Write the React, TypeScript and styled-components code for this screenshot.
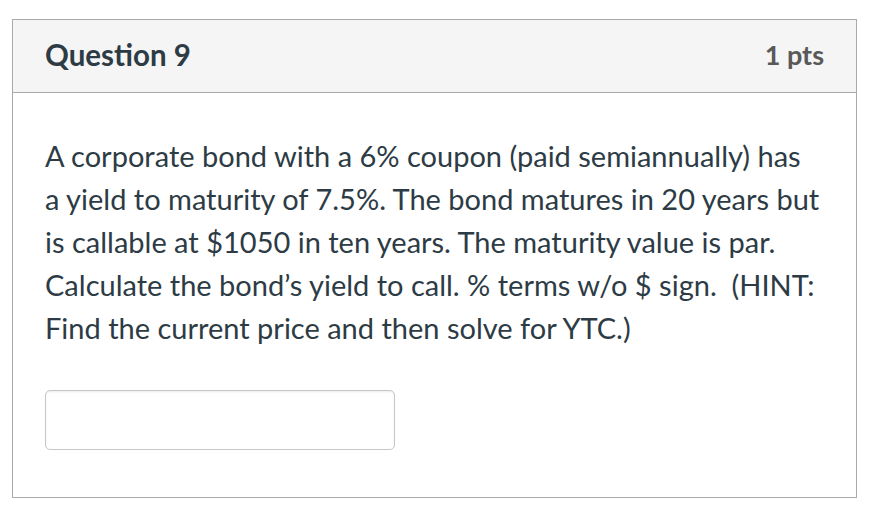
import React from "react";
import styled, { createGlobalStyle } from "styled-components";

const Global = createGlobalStyle`
  html, body { margin: 0; padding: 0; background: #ffffff; }
  body { font-family: Lato, "Noto Sans", sans-serif; }
`;

const Page = styled.div`
  padding: 19px 16px 0 12px;
`;

const Card = styled.div`
  width: 845px;
  height: 479px;
  box-sizing: border-box;
  border: 1px solid #aaaaaa;
  display: flex;
  flex-direction: column;
`;

const Header = styled.div`
  height: 73px;
  box-sizing: border-box;
  background: #f5f5f5;
  border-bottom: 1px solid #aaaaaa;
  display: flex;
  align-items: center;
  justify-content: space-between;
  padding: 0 32px 4px 32px;
`;

const Title = styled.h2`
  margin: 0;
  font-size: 29.5px;
  font-weight: 700;
  color: #2d3b45;
`;

const Points = styled.span`
  font-size: 27px;
  font-weight: 700;
  color: #595959;
`;

const Body = styled.div`
  padding: 41px 35px 0 32px;
  display: flex;
  flex-direction: column;
`;

const Text = styled.p`
  margin: 0;
  font-size: 29px;
  line-height: 43px;
  color: #2d3b45;
`;

const Answer = styled.input`
  margin-top: 41px;
  width: 350px;
  height: 60px;
  box-sizing: border-box;
  border: 1px solid #c7c7c7;
  border-radius: 5px;
  box-shadow: inset 0 1px 2px rgba(0, 0, 0, 0.08);
  background: #ffffff;
  font-family: Lato, sans-serif;
  font-size: 20px;
  padding: 0 12px;
`;

export default function App() {
  return (
    <>
      <Global />
      <Page>
        <Card>
          <Header>
            <Title>Question 9</Title>
            <Points>1 pts</Points>
          </Header>
          <Body>
            <Text>
              A corporate bond with a 6% coupon (paid semiannually) has a yield to maturity of 7.5%. The bond matures in 20 years but is callable at $1050 in ten years. The maturity value is par. Calculate the bond’s yield to call. % terms w/o $ sign.&nbsp; (HINT: Find the current price and then solve for YTC.)
            </Text>
            <Answer type="text" />
          </Body>
        </Card>
      </Page>
    </>
  );
}
